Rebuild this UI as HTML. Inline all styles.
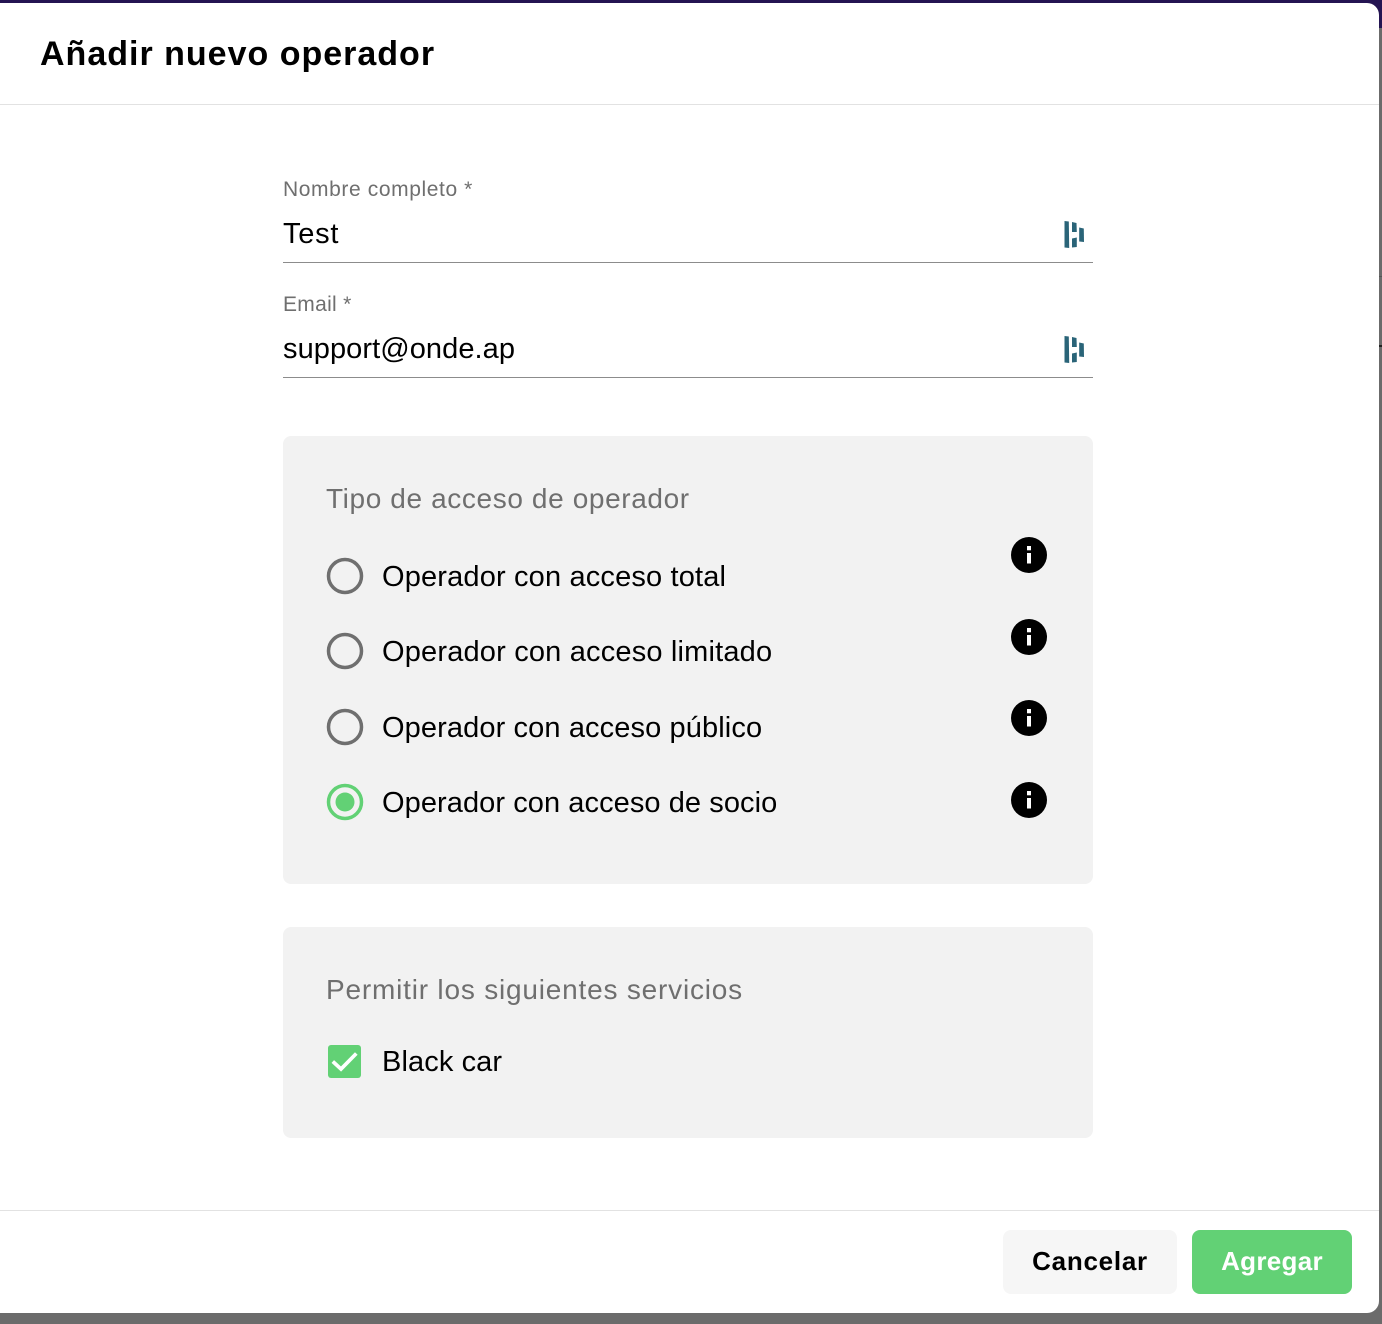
<!DOCTYPE html>
<html><head><meta charset="utf-8">
<style>
html,body{margin:0;padding:0;width:1382px;height:1324px;overflow:hidden;background:#6b6b6b;font-family:"Liberation Sans",sans-serif}
.abs{position:absolute;white-space:nowrap}
#top{position:absolute;left:0;top:0;width:1382px;height:28px;background:#241452}
#modal{position:absolute;left:0;top:3px;width:1379px;height:1310px;background:#fff;border-radius:0 12px 12px 0}
.line{position:absolute;left:0;width:1379px;height:1px;background:#e2e2e2}
.lab{font-size:21px;color:#6f6f6f}
.val{font-size:29px;color:#000}
.ul{position:absolute;left:283px;width:810px;height:1px;background:#8c8c8c}
.box{position:absolute;left:283px;width:810px;background:#f2f2f2;border-radius:8px}
.h{font-size:28px;color:#6f6f6f}
.opt{font-size:29px;color:#000}
svg{position:absolute}
</style></head><body>
<div id="top"></div>
<div class="abs" style="left:1379px;top:276px;width:3px;height:1px;background:#555"></div>
<div class="abs" style="left:1379px;top:345px;width:3px;height:2px;background:#222"></div>
<div id="modal"></div>
<div class="abs" style="left:40px;top:34px;font-size:34px;font-weight:700;color:#000;line-height:40px;letter-spacing:1px">Añadir nuevo operador</div>
<div class="line" style="top:104px"></div>
<div class="abs lab" style="left:283px;top:177px;line-height:26px;letter-spacing:.6px">Nombre completo *</div>
<div class="abs val" style="left:283px;top:217px;line-height:34px;letter-spacing:.75px">Test</div>
<div class="ul" style="top:262px"></div>
<svg style="left:1064px;top:221px" width="21" height="27" viewBox="0 0 21 27"><g fill="#2a6478"><polygon points="0.500,0 4.800,0.500 5.200,27 0.500,26.500"/><polygon points="8,1 12.500,2 12.800,11 8,11"/><polygon points="8,17.500 12.800,16.500 12.800,26 8,26.500"/><polygon points="15.200,6.500 19.800,7.500 20,21 15.200,20.500"/></g></svg>
<div class="abs lab" style="left:283px;top:292px;line-height:26px;letter-spacing:.3px">Email *</div>
<div class="abs val" style="left:283px;top:332px;line-height:34px;letter-spacing:.07px">support@onde.ap</div>
<div class="ul" style="top:377px"></div>
<svg style="left:1064px;top:336px" width="21" height="27" viewBox="0 0 21 27"><g fill="#2a6478"><polygon points="0.500,0 4.800,0.500 5.200,27 0.500,26.500"/><polygon points="8,1 12.500,2 12.800,11 8,11"/><polygon points="8,17.500 12.800,16.500 12.800,26 8,26.500"/><polygon points="15.200,6.500 19.800,7.500 20,21 15.200,20.500"/></g></svg>
<div class="box" style="top:436px;height:448px"></div>
<div class="abs h" style="left:326px;top:482px;line-height:34px;letter-spacing:.62px">Tipo de acceso de operador</div>
<svg style="left:326px;top:557px" width="38" height="38"><circle cx="19" cy="19" r="16.500" fill="none" stroke="#6f6f6f" stroke-width="3.500"/></svg>
<div class="abs opt" style="left:382px;top:560px;line-height:34px;letter-spacing:.16px">Operador con acceso total</div>
<svg style="left:326px;top:632px" width="38" height="38"><circle cx="19" cy="19" r="16.500" fill="none" stroke="#6f6f6f" stroke-width="3.500"/></svg>
<div class="abs opt" style="left:382px;top:635px;line-height:34px;letter-spacing:.18px">Operador con acceso limitado</div>
<svg style="left:326px;top:708px" width="38" height="38"><circle cx="19" cy="19" r="16.500" fill="none" stroke="#6f6f6f" stroke-width="3.500"/></svg>
<div class="abs opt" style="left:382px;top:711px;line-height:34px;letter-spacing:.11px">Operador con acceso público</div>
<svg style="left:326px;top:783px" width="38" height="38"><circle cx="19" cy="19" r="16.500" fill="none" stroke="#62d175" stroke-width="3.500"/><circle cx="19" cy="19" r="9.500" fill="#62d175"/></svg>
<div class="abs opt" style="left:382px;top:786px;line-height:34px;letter-spacing:.07px">Operador con acceso de socio</div>
<svg style="left:1009.700px;top:535.500px" width="38" height="38"><circle cx="19" cy="19" r="18" fill="#000"/><rect x="17" y="17" width="4" height="10.500" fill="#fff"/><rect x="17" y="10" width="4" height="4.300" fill="#fff"/></svg>
<svg style="left:1009.700px;top:617.500px" width="38" height="38"><circle cx="19" cy="19" r="18" fill="#000"/><rect x="17" y="17" width="4" height="10.500" fill="#fff"/><rect x="17" y="10" width="4" height="4.300" fill="#fff"/></svg>
<svg style="left:1009.700px;top:698.500px" width="38" height="38"><circle cx="19" cy="19" r="18" fill="#000"/><rect x="17" y="17" width="4" height="10.500" fill="#fff"/><rect x="17" y="10" width="4" height="4.300" fill="#fff"/></svg>
<svg style="left:1009.700px;top:780.500px" width="38" height="38"><circle cx="19" cy="19" r="18" fill="#000"/><rect x="17" y="17" width="4" height="10.500" fill="#fff"/><rect x="17" y="10" width="4" height="4.300" fill="#fff"/></svg>
<div class="box" style="top:927px;height:211px"></div>
<div class="abs h" style="left:326px;top:973px;line-height:34px;letter-spacing:.8px">Permitir los siguientes servicios</div>
<svg style="left:328px;top:1045px" width="33" height="33"><rect x="0" y="0" width="33" height="33" rx="3" fill="#62d175"/><path d="M4.800 16.500 L13 24 L28.300 8.500" fill="none" stroke="#fff" stroke-width="3.700"/></svg>
<div class="abs opt" style="left:382px;top:1045px;line-height:34px;letter-spacing:.1px">Black car</div>
<div class="line" style="top:1210px"></div>
<div class="abs" style="left:1003px;top:1230px;width:174px;height:64px;background:#f6f6f6;border-radius:8px;font-size:26px;font-weight:700;color:#000;line-height:62px;text-align:center;letter-spacing:.75px">Cancelar</div>
<div class="abs" style="left:1192px;top:1230px;width:160px;height:64px;background:#62d175;border-radius:8px;font-size:26px;font-weight:700;color:#fff;line-height:62px;text-align:center;letter-spacing:.3px">Agregar</div>
</body></html>
